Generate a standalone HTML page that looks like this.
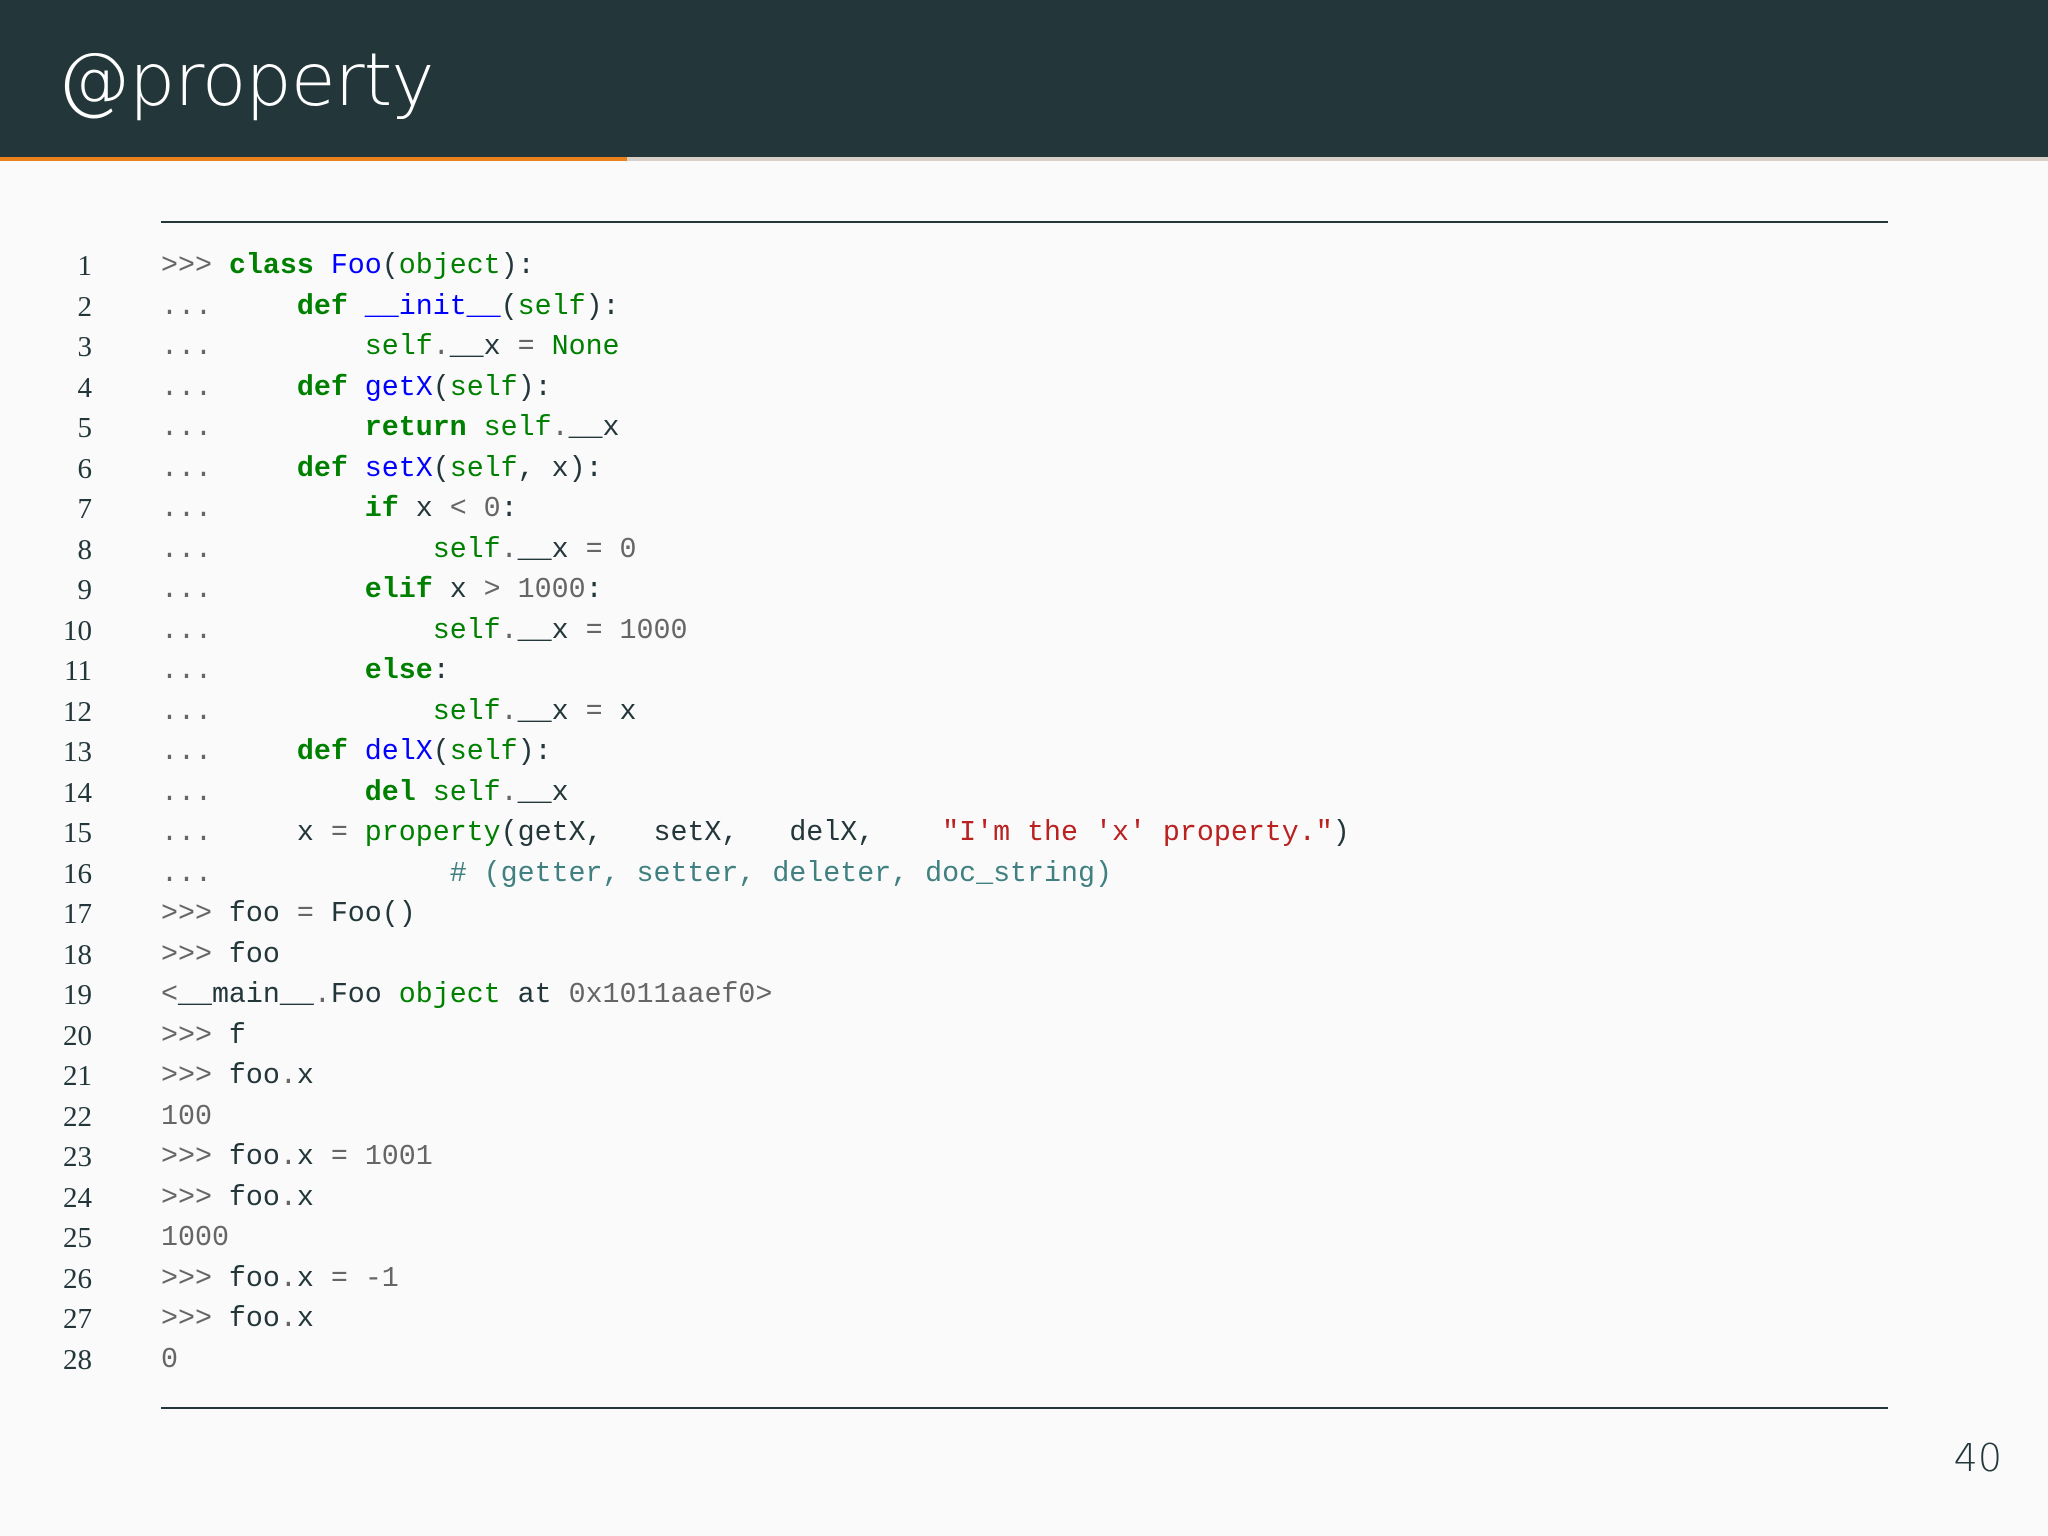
<!DOCTYPE html>
<html><head><meta charset="utf-8"><style>
html,body{margin:0;padding:0}
body{width:2048px;height:1536px;background:#fafafa;position:relative;overflow:hidden;font-family:"Liberation Sans",sans-serif}
.hdr{position:absolute;left:0;top:0;width:2048px;height:157px;background:#23373b}
.title{position:absolute;left:57px;top:36px;color:#fff;font-size:73px;line-height:90px;font-family:"DejaVu Sans","Liberation Sans",sans-serif;font-weight:300;letter-spacing:-1px}
.bar1{position:absolute;left:0;top:157px;width:627px;height:4px;background:#eb811b}
.bar2{position:absolute;left:627px;top:157px;width:1421px;height:4px;background:#d6d0c8}
.rule{position:absolute;left:161px;width:1727px;height:2px;background:#23373b}
pre{margin:0;position:absolute;font-size:28.3px;line-height:40.5px}
.code{left:161px;top:246px;font-family:"Liberation Mono",monospace;color:#23373b}
.nums{left:30px;width:62px;top:246px;text-align:right;font-family:"Liberation Serif",serif;font-size:29px;color:#23373b}
.g{color:#666}
.k{color:#008000;font-weight:bold}
.b{color:#008000}
.n{color:#0000ff}
.s{color:#ba2121}
.c{color:#408080}
.pn{position:absolute;right:46px;top:1436px;font-size:38px;color:#23373b;font-family:"DejaVu Sans",sans-serif;font-weight:300}
</style></head><body>
<div class="hdr"></div>
<div class="title">@property</div>
<div class="bar1"></div><div class="bar2"></div>
<div class="rule" style="top:221px"></div>
<div class="rule" style="top:1407px"></div>
<pre class="nums">1
2
3
4
5
6
7
8
9
10
11
12
13
14
15
16
17
18
19
20
21
22
23
24
25
26
27
28</pre>
<pre class="code"><span class="g">&gt;&gt;&gt;</span> <span class="k">class</span> <span class="n">Foo</span>(<span class="b">object</span>):
<span class="g">...</span>     <span class="k">def</span> <span class="n">__init__</span>(<span class="b">self</span>):
<span class="g">...</span>         <span class="b">self</span><span class="g">.</span>__x <span class="g">=</span> <span class="b">None</span>
<span class="g">...</span>     <span class="k">def</span> <span class="n">getX</span>(<span class="b">self</span>):
<span class="g">...</span>         <span class="k">return</span> <span class="b">self</span><span class="g">.</span>__x
<span class="g">...</span>     <span class="k">def</span> <span class="n">setX</span>(<span class="b">self</span>, x):
<span class="g">...</span>         <span class="k">if</span> x <span class="g">&lt;</span> <span class="g">0</span>:
<span class="g">...</span>             <span class="b">self</span><span class="g">.</span>__x <span class="g">=</span> <span class="g">0</span>
<span class="g">...</span>         <span class="k">elif</span> x <span class="g">&gt;</span> <span class="g">1000</span>:
<span class="g">...</span>             <span class="b">self</span><span class="g">.</span>__x <span class="g">=</span> <span class="g">1000</span>
<span class="g">...</span>         <span class="k">else</span>:
<span class="g">...</span>             <span class="b">self</span><span class="g">.</span>__x <span class="g">=</span> x
<span class="g">...</span>     <span class="k">def</span> <span class="n">delX</span>(<span class="b">self</span>):
<span class="g">...</span>         <span class="k">del</span> <span class="b">self</span><span class="g">.</span>__x
<span class="g">...</span>     x <span class="g">=</span> <span class="b">property</span>(getX,   setX,   delX,    <span class="s">"I'm the 'x' property."</span>)
<span class="g">...</span>              <span class="c"># (getter, setter, deleter, doc_string)</span>
<span class="g">&gt;&gt;&gt;</span> foo <span class="g">=</span> Foo()
<span class="g">&gt;&gt;&gt;</span> foo
<span class="g">&lt;</span>__main__<span class="g">.</span>Foo <span class="b">object</span> at <span class="g">0x1011aaef0&gt;</span>
<span class="g">&gt;&gt;&gt;</span> f
<span class="g">&gt;&gt;&gt;</span> foo<span class="g">.</span>x
<span class="g">100</span>
<span class="g">&gt;&gt;&gt;</span> foo<span class="g">.</span>x <span class="g">=</span> <span class="g">1001</span>
<span class="g">&gt;&gt;&gt;</span> foo<span class="g">.</span>x
<span class="g">1000</span>
<span class="g">&gt;&gt;&gt;</span> foo<span class="g">.</span>x <span class="g">=</span> <span class="g">-1</span>
<span class="g">&gt;&gt;&gt;</span> foo<span class="g">.</span>x
<span class="g">0</span></pre>
<div class="pn">40</div>
</body></html>
